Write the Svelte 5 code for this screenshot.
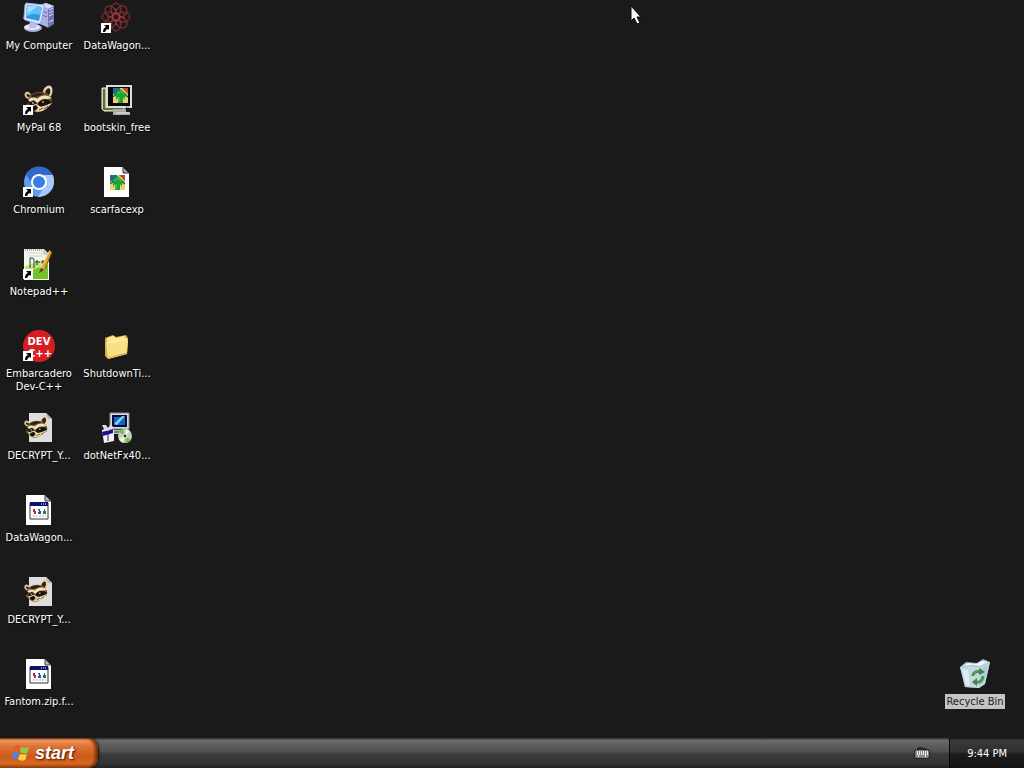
<script lang="ts">
	type Item = {
		name: string;
		icon: string;
		col: number;
		row: number;
		shortcut?: boolean;
	};

	const items: Item[] = [
		{ name: 'My Computer', icon: 'computer', col: 1, row: 1 },
		{ name: 'MyPal 68', icon: 'raccoon', col: 1, row: 2, shortcut: true },
		{ name: 'Chromium', icon: 'chromium', col: 1, row: 3, shortcut: true },
		{ name: 'Notepad++', icon: 'notepad', col: 1, row: 4, shortcut: true },
		{ name: 'Embarcadero Dev-C++', icon: 'dev', col: 1, row: 5, shortcut: true },
		{ name: 'DECRYPT_Y...', icon: 'html', col: 1, row: 6 },
		{ name: 'DataWagon...', icon: 'file', col: 1, row: 7 },
		{ name: 'DECRYPT_Y...', icon: 'html', col: 1, row: 8 },
		{ name: 'Fantom.zip.f...', icon: 'file', col: 1, row: 9 },
		{ name: 'DataWagon...', icon: 'spiro', col: 2, row: 1, shortcut: true },
		{ name: 'bootskin_free', icon: 'bootskin', col: 2, row: 2 },
		{ name: 'scarfacexp', icon: 'skinfile', col: 2, row: 3 },
		{ name: 'ShutdownTi...', icon: 'folder', col: 2, row: 5 },
		{ name: 'dotNetFx40...', icon: 'setup', col: 2, row: 6 }
	];

	const petals = [0, 45, 90, 135, 180, 225, 270, 315];

	let selected = $state('Recycle Bin');
	let time = $state('9:44 PM');
</script>

{#snippet raccoonFace()}
	<path d="M3 8C0 10 2 14 5 15L8 11C7 8 5 7 3 8Z" fill="#d9c39a" />
	<path d="M4 10C3 11 4 13 6 13L7 11Z" fill="#1e1610" />
	<path d="M20 8C20 4 25 0 28 2C31 6 29 12 26 14Z" fill="#ead6ad" />
	<path d="M22 8C23 5 26 3 27 5C28 8 27 10 25 12Z" fill="#2a1d13" />
	<path d="M6 12C11 8 17 7 23 9C28 12 30 16 28 21L22 24C20 28 13 30 8 26L3 21L6 18Z" fill="#745632" />
	<path d="M8 12C11 9 16 8 22 10L16 12L10 14Z" fill="#2d2015" />
	<path d="M5 16C8 13 12 13 14 15C18 11 23 10 29 14L24 15C20 14 17 16 15 19L12 17L8 18Z" fill="#f5e3b8" />
	<path d="M5 19L11 16L13 20L8 22ZM15 19C18 15 24 14 29 18L23 22L16 22Z" fill="#18120d" />
	<path d="M6 22L13 20L18 23L29 19L23 25C19 28 12 29 8 25Z" fill="#ecd6a6" />
	<path d="M8 23L13 21L15 24L12 27L9 26Z" fill="#17110d" />
	<path d="M16 26L20 24M21 25L25 22" stroke="#5a452c" fill="none" />
	<path d="M9 19H11M19 18H21" stroke="#fff" fill="none" />
{/snippet}

{#snippet skinArt()}
	<path d="M0 0H15V15H0Z" fill="#f0cf6a" />
	<path d="M0 0H7V6H0Z" fill="#276b91" />
	<path d="M9 0H15V6Z" fill="#b84b35" />
	<path d="M0 6H15V8H0Z" fill="#9ccfa0" />
	<path d="M0 9C2 5 5 3 8 1C10 4 14 5 15 10L12 8V12L10 9V15H5V9L3 12V8Z" fill="#18a436" />
	<path d="M4 6L8 3L11 6M6 9V14" stroke="#5fce4e" fill="none" />
	<path d="M0 9L3 6M12 6L15 9" stroke="#07651e" fill="none" />
{/snippet}

{#snippet picture(icon: string)}
	{#if icon == 'computer'}
		<path d="M17 3L23 1L31 4V22L25 26L17 22Z" fill="#7174b5" />
		<path d="M17 3L23 1L31 4L25 7Z" fill="#d4d8fc" />
		<path d="M17 4L25 7V25L17 22Z" fill="#aab0e4" />
		<path d="M26 8L30 6M26 11L30 9M26 14L30 12M26 20L30 18" stroke="#e0e3ff" />
		<path d="M19 9L24 11M19 13L24 15" stroke="#696da5" />
		<ellipse cx="10" cy="26" rx="9" ry="4" fill="#a8b0d8" />
		<ellipse cx="9" cy="25" rx="8" ry="3" fill="#e4e8fa" />
		<path d="M7 18H14L13 26H6Z" fill="#b6bee9" />
		<path d="M3 1L21 3Q22 4 21 6L18 20Q17 22 15 22L2 18Q0 17 1 15L2 3Z" fill="#dce4ff" stroke="#9aa4dc" />
		<path d="M4 3L19 5L16 19L3 16Z" fill="#2f98e6" />
		<path d="M4 3L19 5L17 13Q9 10 3 15Z" fill="#62c2f8" />
		<path d="M5 4L14 5L4 12Z" fill="#a3e0ff" />
	{:else if icon == 'spiro'}
		<g fill="none" stroke="#96303c" stroke-width="1">
			{#each petals as angle}
				<ellipse cx="15" cy="8" rx="5" ry="7" transform="rotate({angle} 15 15)" />
			{/each}
			<circle cx="15" cy="15" r="13" stroke="#74232e" stroke-dasharray="2 3" />
			<circle cx="15" cy="15" r="8" stroke="#8a2b36" stroke-dasharray="3 2" />
			<circle cx="15" cy="15" r="4" stroke="#b83c4a" />
		</g>
		<circle cx="15" cy="15" r="2" fill="#1a1617" />
	{:else if icon == 'raccoon'}
		{@render raccoonFace()}
	{:else if icon == 'chromium'}
		<circle cx="16" cy="16" r="15" fill="#639af2" />
		<path d="M3 8C9-2 24-2 30 9H16A7 7 0 0 0 9 18Z" fill="#3069ca" />
		<path d="M30 9C34 20 26 31 15 31L22 20A7 7 0 0 0 21 11V9Z" fill="#a9c9fc" />
		<circle cx="16" cy="16" r="8" fill="#fff" />
		<circle cx="16" cy="16" r="6" fill="#397ce5" />
	{:else if icon == 'notepad'}
		<path d="M1 1H21L26 6V32H1Z" fill="#f4f5eb" />
		<path d="M2 18L25 11V31H2Z" fill="#c3e67c" />
		<path d="M2 24L25 17V31H2Z" fill="#74c22c" />
		<path d="M2 2H20" stroke="#a8aba5" stroke-width="2" stroke-dasharray="1 1" />
		<path d="M4 5H21M4 8H20" stroke="#d2d4cc" />
		<path d="M7 20V10H9Q11 10 11 12V20" fill="none" stroke="#273b22" stroke-width="1" />
		<path d="M12 14H17M14 12V17M18 14H22M20 12V17" stroke="#153b20" />
		<path d="M20 1L26 7H20Z" fill="#c9cdc5" />
		<path d="M16 25L18 20L26 3L29 4L22 21Z" fill="#e0a33a" />
		<path d="M18 20L27 2" stroke="#f5d475" />
		<path d="M22 21L29 4" stroke="#7d531f" />
		<path d="M16 25L18 20L21 22Z" fill="#4a3d29" />
	{:else if icon == 'dev'}
		<circle cx="16" cy="16" r="16" fill="#d61d23" />
		<text x="16" y="15" class="dev-text">DEV</text>
		<text x="17" y="27" class="dev-text">C++</text>
	{:else if icon == 'html'}
		<path d="M6 1H23L29 7V30H6Z" fill="#dedede" />
		<path d="M23 1V7H29Z" fill="#bbb" />
		<g transform="translate(0 2) scale(.84)">{@render raccoonFace()}</g>
	{:else if icon == 'file'}
		<path d="M3 1H22L28 7V31H3Z" fill="#fff" />
		<path d="M22 1V7H28Z" fill="#b7b7b7" stroke="#444" />
		<path d="M7 9H25V25H7Z" fill="#fff" stroke="#333" />
		<path d="M7 8H25V12H7Z" fill="#101269" />
		<path d="M18 10H24" stroke="#fff" stroke-dasharray="1 1" />
		<path d="M10 15H12V17H13V20H11V18H10Z" fill="#bb2541" />
		<path d="M15 15H17V17H18V20H15V18H16Z" fill="#2355a7" />
		<path d="M21 15H22V17H23V20H20V17H21Z" fill="#237851" />
		<path d="M10 22H23" stroke="#aaa" stroke-dasharray="2 1" />
	{:else if icon == 'bootskin'}
		<path d="M1 4H23V27H3L1 25Z" fill="#b9bc89" stroke="#ececd4" />
		<path d="M3 5V25H22" fill="none" stroke="#656a39" stroke-width="2" />
		<path d="M12 25H25V28H29V31H12Z" fill="#aaa" />
		<path d="M15 29H28" stroke="#eee" />
		<path d="M5 1H31V24H5Z" fill="#ddd" />
		<path d="M7 3H29V22H7Z" fill="#080b09" />
		<g transform="translate(12 4)">{@render skinArt()}</g>
		<path d="M25 23H28" stroke="#16c443" />
	{:else if icon == 'skinfile'}
		<path d="M3 1H22L28 7V31H3Z" fill="#fff" />
		<path d="M22 1V7H28Z" fill="#aaa" stroke="#333" />
		<g transform="translate(9 9)">{@render skinArt()}</g>
	{:else if icon == 'folder'}
		<path d="M4 8L12 5L15 7L25 5L27 8L26 24L7 29L4 26Z" fill="#d9af45" />
		<path d="M6 8L12 6L15 8L24 6L24 23L7 27Z" fill="#ffe98c" />
		<path d="M5 12L25 8L27 10L26 24L7 29Z" fill="#f8e184" />
		<path d="M6 13L26 9" stroke="#fff9cf" />
		<path d="M7 28L26 23" stroke="#cda243" />
	{:else if icon == 'setup'}
		<path d="M9 1H28V17H9Z" fill="#ddd" stroke="#888" />
		<path d="M12 4H25V14H12Z" fill="#1266bd" stroke="#080840" stroke-width="2" />
		<path d="M13 12L21 4H24L16 13Z" fill="#7bd4f5" />
		<path d="M11 18H28L30 22H10Z" fill="#bbb" />
		<path d="M13 20H25" stroke="#444" />
		<path d="M1 18L10 15L13 18V29L3 31Z" fill="#f2f2f2" />
		<path d="M1 20L12 17V21L2 24Z" fill="#17138e" />
		<path d="M3 17L1 13L5 13L7 16L10 12L12 15L7 19Z" fill="#ddd" />
		<path d="M7 19V29" stroke="#1c1684" stroke-width="1" />
		<circle cx="24" cy="24" r="7" fill="#c4ccc1" />
		<path d="M24 24L18 20A7 7 0 0 1 22 17ZM24 24L30 28A7 7 0 0 1 25 31Z" fill="#66c653" />
		<path d="M24 24L25 17A7 7 0 0 1 29 19ZM24 24L22 31A7 7 0 0 1 18 27Z" fill="#f1f5da" />
		<circle cx="24" cy="24" r="2" fill="#222" stroke="#fff" />
	{:else if icon == 'bin'}
		<path d="M1 9L7 4L18 5L24 1L31 4L26 26L20 30L6 29Z" fill="#a3bdc9" />
		<path d="M1 9L12 8L21 9L31 4L26 26L20 30L6 29Z" fill="#c3d8e0" />
		<path d="M4 8L9 5L17 6L23 3L29 4L21 8L13 7Z" fill="#edf7fa" />
		<path d="M3 11L9 12L11 28L7 27Z" fill="#dcecf2" />
		<path d="M22 10L29 7L25 25L20 28Z" fill="#b2cdd8" />
		<g fill="none" stroke="#4c9a50" stroke-width="3">
			<path d="M14 18C14 14 18 13 21 14" />
			<path d="M24 18C24 22 21 25 17 24" />
		</g>
		<path d="M20 10L26 14L20 17ZM18 20L13 24L18 28Z" fill="#3b8840" />
	{/if}
{/snippet}

{#snippet desktopIcon(name: string, icon: string, shortcut: boolean)}
	<button class="icon" class:selected={selected == name} onclick={() => (selected = name)}>
		<svg viewBox="0 0 32 32" width="32" height="32" aria-hidden="true">
			{@render picture(icon)}
			{#if shortcut}
				<path d="M0 21H10V31H0Z" fill="#fff" />
				<path d="M3 23H8V28L7 27Q5 27 4 30H2Q2 26 5 25Z" fill="#000" />
			{/if}
		</svg>
		<span>{name}</span>
	</button>
{/snippet}

<div class="screen">
	<main>
		<div class="icons">
			{#each items as item}
				<div style="grid-column: {item.col}; grid-row: {item.row}">
					{@render desktopIcon(item.name, item.icon, item.shortcut ?? false)}
				</div>
			{/each}
		</div>
		<div class="bin">
			{@render desktopIcon('Recycle Bin', 'bin', false)}
		</div>
	</main>

	<footer>
		<button class="start">
			<svg viewBox="0 0 18 18" width="18" height="18" aria-hidden="true">
				<path d="M4 2Q7 0 9 2L8 8Q5 6 2 8Z" fill="#ef582b" />
				<path d="M10 3Q13 5 18 3L16 9Q12 10 9 8Z" fill="#8ed044" />
				<path d="M2 9Q5 7 8 9L6 15Q3 13 0 15Z" fill="#4786e9" />
				<path d="M9 10Q12 11 16 10L14 16Q10 18 7 15Z" fill="#ffd541" />
			</svg>
			<span>start</span>
		</button>
		<button class="keyboard" aria-label="Keyboard">
			<svg viewBox="0 0 16 14" width="16" height="14" aria-hidden="true">
				<path d="M4 4V2H6V1M6 2H9V3H12V4" stroke="#0a0a0a" fill="none" />
				<path d="M1 4H15V12H1Z" fill="#eee" stroke="#111" />
				<path d="M2 6H14M2 8H14" stroke="#222" stroke-dasharray="1 1" />
				<path d="M2 10H4M5 10H11M12 10H14" stroke="#222" />
			</svg>
		</button>
		<div class="tray">{time}</div>
	</footer>

	<svg class="cursor" viewBox="0 0 12 20" width="12" height="20" aria-hidden="true">
		<path d="M1 1V16L4 13L7 19L10 18L7 12H11Z" fill="#f5f5f5" stroke="#080808" />
	</svg>
</div>

<style>
	:global(body) {
		margin: 0;
		background: #1a1a1a;
	}

	.screen {
		position: relative;
		display: flex;
		flex-direction: column;
		min-height: 100vh;
		font-family: 'DejaVu Sans Condensed', 'Noto Sans', sans-serif;
		font-size: 11px;
		color: #fff;
	}

	button {
		margin: 0;
		padding: 0;
		border: 0;
		background: none;
		color: inherit;
		font: inherit;
	}

	main {
		flex: 1;
		display: flex;
		justify-content: space-between;
	}

	.icons {
		display: grid;
		grid-template-columns: 78px 78px;
		grid-template-rows: repeat(9, 82px);
	}

	.icon {
		display: flex;
		flex-direction: column;
		align-items: center;
		gap: 4px;
		width: 78px;
		padding-top: 2px;
	}

	.icon svg {
		display: block;
	}

	.icon span {
		max-width: 76px;
		padding: 1px;
		line-height: 13px;
		text-align: center;
		text-shadow: 1px 1px 1px #000;
	}

	.icon.selected span {
		background: #c4c4c4;
		color: #222;
		text-shadow: none;
	}

	.dev-text {
		font: bold 10px 'DejaVu Sans', sans-serif;
		fill: #fff;
		text-anchor: middle;
	}

	.bin {
		align-self: flex-end;
		padding: 0 10px 29px 0;
	}

	footer {
		display: flex;
		align-items: stretch;
		height: 30px;
		background: linear-gradient(#303030, #6a6a6a 8%, #505050 45%, #3a3a3a 55%, #353535 85%, #222);
	}

	.start {
		display: flex;
		align-items: center;
		gap: 6px;
		width: 98px;
		padding-left: 11px;
		border-radius: 0 10px 10px 0;
		background: linear-gradient(#7a3a18, #f09a60 8%, #e0763a 25%, #cc5a1c 60%, #d8681f 85%, #9a4210);
		box-shadow: inset -3px 0 3px #7a300a, 1px 0 2px #111;
	}

	.start span {
		font: italic bold 18px 'Liberation Sans', Arial, sans-serif;
		line-height: 24px;
		text-shadow: 1px 1px 2px #3a1503;
	}

	.keyboard {
		margin-left: auto;
		padding: 0 19px 0 0;
	}

	.keyboard svg {
		display: block;
	}

	.tray {
		display: flex;
		align-items: center;
		justify-content: flex-end;
		width: 57px;
		padding-right: 17px;
		border-left: 1px solid #050505;
		background: linear-gradient(#1a1a1a, #3a3a3a 8%, #303030 45%, #1c1c1c 55%, #141414);
	}

	.cursor {
		position: absolute;
		top: 5px;
		left: 630px;
	}
</style>
